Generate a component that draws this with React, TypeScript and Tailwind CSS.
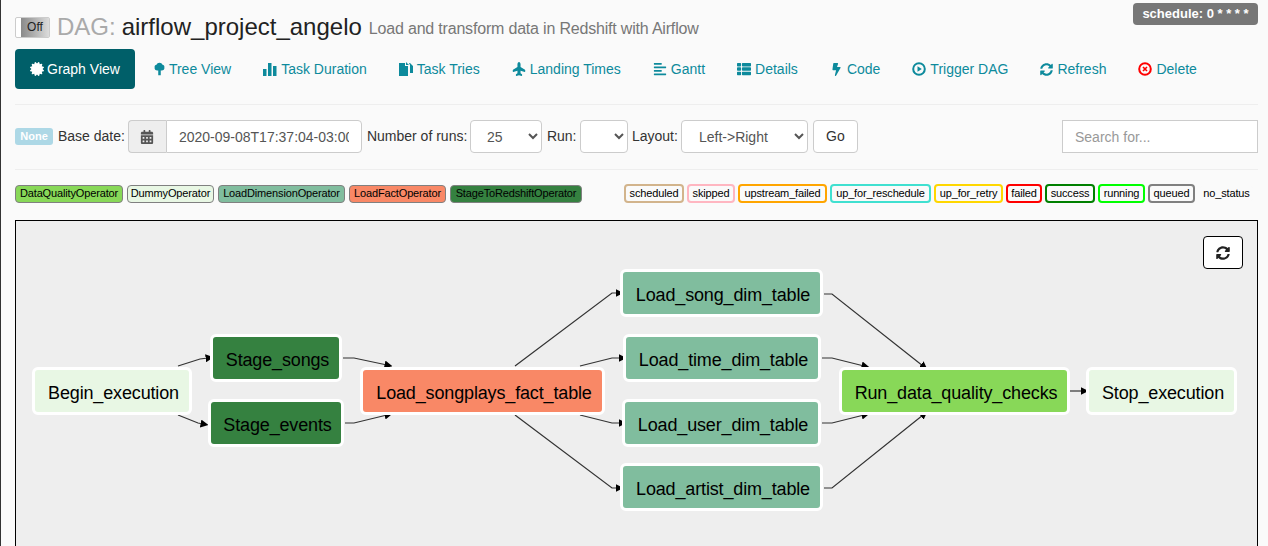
import { FaCertificate, FaPlane, FaAlignLeft, FaThList, FaBolt, FaSyncAlt, FaCalendarAlt } from "react-icons/fa";

const TreeIcon = () => (
  <svg viewBox="0 0 14 16" className="w-[11px] h-[14px]" fill="currentColor">
    <path d="M7 0C9 0 10 1 10.5 2.2C12.5 2.6 13.6 4.2 13.2 6C13.6 8 12 10 9.8 10H8.6V16H5.4V10H4.2C2 10 .4 8 .8 6C.4 4.2 1.5 2.6 3.5 2.2C4 1 5 0 7 0Z" />
  </svg>
);

const StatsIcon = () => (
  <svg viewBox="0 0 14 14" className="w-[14px] h-[14px]" fill="currentColor">
    <rect x="0" y="7" width="3.5" height="7" />
    <rect x="5" y="1" width="3.5" height="13" />
    <rect x="10" y="4" width="3.5" height="10" />
  </svg>
);

const DuplicateIcon = () => (
  <svg viewBox="0 0 14 14" className="w-[14px] h-[14px]" fill="currentColor">
    <path d="M0 1h6v3h3v10H0z" />
    <path d="M7 0l3 3H7zM10 1h1l3 3v7h-3V3z" />
  </svg>
);

const PlayCircleIcon = () => (
  <svg viewBox="0 0 14 14" className="w-[14px] h-[14px]">
    <circle cx="7" cy="7" r="5.8" fill="none" stroke="currentColor" strokeWidth="2" />
    <path d="M5.5 4.2L9.8 7l-4.3 2.8z" fill="currentColor" />
  </svg>
);

const RemoveCircleIcon = () => (
  <svg viewBox="0 0 14 14" className="w-[14px] h-[14px]">
    <circle cx="7" cy="7" r="5.8" fill="none" stroke="#ff0000" strokeWidth="2" />
    <path d="M5 5l4 4M9 5l-4 4" fill="none" stroke="#ff0000" strokeWidth="1.6" />
  </svg>
);

const navItems = [
  { label: "Tree View", icon: <TreeIcon /> },
  { label: "Task Duration", icon: <StatsIcon /> },
  { label: "Task Tries", icon: <DuplicateIcon /> },
  { label: "Landing Times", icon: <FaPlane className="-rotate-90 text-[14px]" /> },
  { label: "Gantt", icon: <FaAlignLeft className="text-[14px]" /> },
  { label: "Details", icon: <FaThList className="text-[14px]" /> },
  { label: "Code", icon: <FaBolt className="text-[13px]" /> },
  { label: "Trigger DAG", icon: <PlayCircleIcon /> },
  { label: "Refresh", icon: <FaSyncAlt className="text-[13px]" /> },
  { label: "Delete", icon: <RemoveCircleIcon /> },
];

const operators = [
  { label: "DataQualityOperator", cls: "w-[108px] bg-[#88d858]" },
  { label: "DummyOperator", cls: "w-[87px] bg-[#e8f7e4]" },
  { label: "LoadDimensionOperator", cls: "w-[127px] bg-[#80bd9e]" },
  { label: "LoadFactOperator", cls: "w-[97px] bg-[#f98866]" },
  { label: "StageToRedshiftOperator", cls: "w-[132px] bg-[#358140]" },
];

const states = [
  { label: "scheduled", cls: "w-[60px] border-[#d2b48c]" },
  { label: "skipped", cls: "w-[48px] border-[#ffb6c1]" },
  { label: "upstream_failed", cls: "w-[89px] border-[#ffa500]" },
  { label: "up_for_reschedule", cls: "w-[101px] border-[#40e0d0]" },
  { label: "up_for_retry", cls: "w-[69px] border-[#ffd700]" },
  { label: "failed", cls: "w-[36px] border-[#ff0000]" },
  { label: "success", cls: "w-[50px] border-[#008000]" },
  { label: "running", cls: "w-[47px] border-[#00ff00]" },
  { label: "queued", cls: "w-[47px] border-[#808080]" },
  { label: "no_status", cls: "w-[57px] border-[#fafafa]" },
];

// node positions are relative to the graph canvas
const nodes = [
  { label: "Begin_execution", cls: "left-[16px] top-[146px] w-[160px] bg-[#e8f7e4]" },
  { label: "Stage_songs", cls: "left-[194px] top-[113px] w-[132px] bg-[#358140]" },
  { label: "Stage_events", cls: "left-[192px] top-[178px] w-[136px] bg-[#358140]" },
  { label: "Load_songplays_fact_table", cls: "left-[344px] top-[146px] w-[245px] bg-[#f98866]" },
  { label: "Load_song_dim_table", cls: "left-[604px] top-[48px] w-[203px] bg-[#80bd9e]" },
  { label: "Load_time_dim_table", cls: "left-[607px] top-[113px] w-[198px] bg-[#80bd9e]" },
  { label: "Load_user_dim_table", cls: "left-[606px] top-[178px] w-[199px] bg-[#80bd9e]" },
  { label: "Load_artist_dim_table", cls: "left-[604px] top-[242px] w-[203px] bg-[#80bd9e]" },
  { label: "Run_data_quality_checks", cls: "left-[823px] top-[146px] w-[231px] bg-[#88d858]" },
  { label: "Stop_execution", cls: "left-[1070px] top-[146px] w-[151px] bg-[#e8f7e4]" },
];

const edges = [
  "M178 366L200 359L208 358",
  "M178 415L198 423L203 424",
  "M343 358L354 358L387 365",
  "M345 423L354 423L387 415",
  "M515 366L612 293L618 293",
  "M580 366L612 358L621 358",
  "M580 415L612 423L621 423",
  "M515 415L612 488L618 488",
  "M824 294L832 294L923 366",
  "M822 358L832 358L864 366",
  "M822 423L832 423L864 415",
  "M824 488L832 488L923 415",
  "M1070 391L1083 391",
];

const fieldCls = "h-[33px] border border-[#ccc] rounded-[4px] bg-white text-[14px] text-[#555]";

export default function App() {
  return (
    <div className="h-[546px] overflow-hidden bg-[#fafafa] border-l border-[#333] pl-[14px] pr-[10px] font-['Liberation_Sans',Arial,sans-serif] text-[14px] text-[#333]">
      <div className="relative h-[49px] flex items-center pt-[5px]">
        <div className="flex items-center">
          <div className="w-[35px] h-[21px] flex border border-[#ccc] rounded-[2px] bg-white">
            <div className="w-[5px]" />
            <div className="flex-1 flex items-center justify-center bg-gradient-to-r from-[#8a8a8a] to-[#dcdcdc] text-[12px] text-[#222]">
              Off
            </div>
          </div>
          <span className="ml-[7px] text-[24px] text-[#aaa]">DAG:</span>
          <span className="ml-[6px] text-[24px] text-[#222]">airflow_project_angelo</span>
          <span className="ml-[7px] mt-[3px] text-[16px] tracking-[-0.19px] text-[#777]">Load and transform data in Redshift with Airflow</span>
        </div>
        <div className="absolute right-0 top-[3px] h-[22px] w-[125px] rounded-[4px] bg-[#777] text-white text-[13px] font-bold flex items-center justify-center">
          schedule: 0 * * * *
        </div>
      </div>

      <nav className="flex items-center gap-[3px] h-[40px] text-[14px] text-[#0d8a9c]">
        <a className="flex items-center gap-[3px] h-[40px] px-[15px] mr-[1px] rounded-[4px] bg-[#005f69] text-white">
          <FaCertificate className="text-[14px]" />
          Graph View
        </a>
        {navItems.map((item) => (
          <a key={item.label} className="flex items-center gap-[4px] h-[40px] pl-[15px] pr-[14px]">
            {item.icon}
            {item.label}
          </a>
        ))}
      </nav>

      <div className="mt-[15px] border-t border-[#eee] pt-[15px] pb-[16px] flex items-center">
        <span className="h-[17px] w-[38px] mr-[5px] rounded-[3px] bg-[#add8e6] text-white text-[11px] font-bold flex items-center justify-center">
          None
        </span>
        <span>Base date:</span>
        <div className="ml-[3px] flex">
          <div className="w-[38px] h-[33px] flex items-center justify-center border border-[#ccc] border-r-0 rounded-l-[4px] bg-[#eee] text-[#555]">
            <FaCalendarAlt className="text-[14px]" />
          </div>
          <input
            readOnly
            value="2020-09-08T17:37:04-03:00"
            className="w-[196px] h-[33px] px-[12px] border border-[#ccc] rounded-r-[4px] bg-white text-[14px] text-[#555] outline-none"
          />
        </div>
        <span className="ml-[5px] w-[100px] whitespace-nowrap">Number of runs:</span>
        <select defaultValue="25" className={`${fieldCls} ml-[3px] w-[72px] pl-[12px]`}>
          <option>25</option>
        </select>
        <span className="ml-[5px] w-[30px]">Run:</span>
        <select className={`${fieldCls} ml-[3px] w-[48px]`}>
          <option></option>
        </select>
        <span className="ml-[4px] w-[46px]">Layout:</span>
        <select defaultValue="LR" className={`${fieldCls} ml-[3px] w-[127px] pl-[13px]`}>
          <option value="LR">{"Left->Right"}</option>
        </select>
        <button className="ml-[5px] h-[33px] w-[45px] border border-[#ccc] rounded-[4px] bg-white text-[14px] text-[#333]">
          Go
        </button>
        <input
          placeholder="Search for..."
          className="ml-auto w-[196px] h-[33px] px-[12px] border border-[#ccc] bg-white text-[14px] outline-none placeholder:text-[#999]"
        />
      </div>

      <div className="border-t border-[#eee] pt-[14px] flex items-center justify-between h-[51px] pb-[17px] pr-[3px] text-[11px] tracking-[-0.15px] text-black">
        <div className="flex gap-[4px]">
          {operators.map((op) => (
            <span key={op.label} className={`${op.cls} h-[18px] flex items-center justify-center whitespace-nowrap border border-[#808080] rounded-[4px]`}>
              {op.label}
            </span>
          ))}
        </div>
        <div className="flex gap-[3px]">
          {states.map((st) => (
            <span key={st.label} className={`${st.cls} h-[19px] flex items-center justify-center whitespace-nowrap border-2 rounded-[4px]`}>
              {st.label}
            </span>
          ))}
        </div>
      </div>

      <div className="relative h-[340px] border border-black bg-[#eee]">
        <svg className="absolute inset-0 w-full h-full" fill="none">
          <defs>
            <marker id="arrow" viewBox="0 0 10 10" refX="3" refY="5" markerWidth="8" markerHeight="8" orient="auto" markerUnits="userSpaceOnUse">
              <path d="M0 0L10 5L0 10z" fill="#000" />
            </marker>
          </defs>
          <g transform="translate(-16 -221)">
            {edges.map((d) => (
              <path key={d} d={d} stroke="#333" strokeWidth="1.2" markerEnd="url(#arrow)" />
            ))}
          </g>
        </svg>
        {nodes.map((n) => (
          <div key={n.label} className={`${n.cls} absolute h-[48px] flex items-center justify-center pt-[4px] pl-[3px] border-[3px] border-white rounded-[6px] text-[18px] tracking-[-0.15px] text-black`}>
            {n.label}
          </div>
        ))}
        <button className="absolute left-[1187px] top-[15px] w-[40px] h-[33px] flex items-center justify-center border border-black rounded-[4px] bg-white text-[#222]">
          <FaSyncAlt className="text-[14px]" />
        </button>
      </div>
    </div>
  );
}
